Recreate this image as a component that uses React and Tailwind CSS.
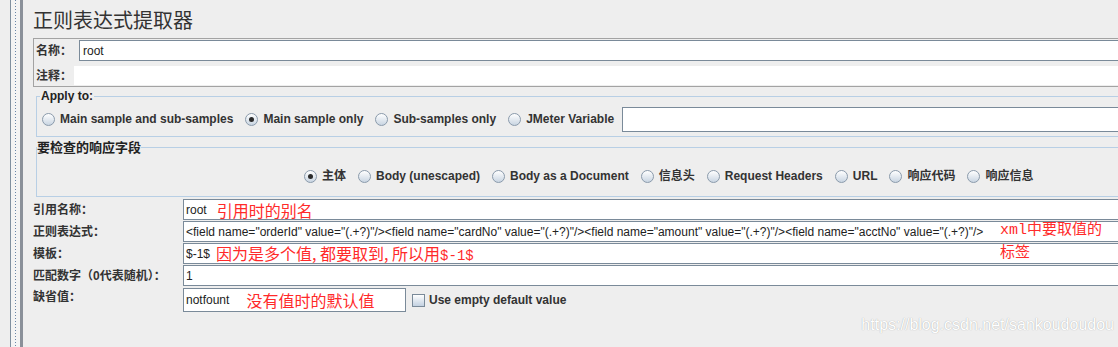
/* eslint-disable */

const ui = '"Liberation Sans", "Noto Sans CJK SC", sans-serif';
const cjk = '"Noto Sans CJK SC", "Liberation Sans", sans-serif';
const mono = '"Liberation Mono", "DejaVu Sans Mono", monospace';

const labelClass = 'text-[12px] font-bold text-[#333333] whitespace-nowrap';
const noteClass = 'text-[16px] leading-none text-[#ff2a2a] whitespace-nowrap';

function Radio({ checked, label }) {
  return (
    <label className="flex items-center gap-[5px]">
      <span className="flex h-[13px] w-[13px] items-center justify-center rounded-full border border-[#8a9aab] bg-gradient-to-b from-white to-[#c9d5e2]">
        {checked && <span className="h-[5px] w-[5px] rounded-full bg-[#2b2b2b]" />}
      </span>
      <span className={labelClass}>{label}</span>
    </label>
  );
}

function Field({ className = '', children }) {
  return (
    <div className={`flex items-center gap-[10px] border border-[#7a8a99] bg-white pl-[2px] ${className}`}>
      {children}
    </div>
  );
}

const regex =
  '<field name="orderId" value="(.+?)"/><field name="cardNo" value="(.+?)"/><field name="amount" value="(.+?)"/><field name="acctNo" value="(.+?)"/>';

export default function App() {
  return (
    <div className="relative flex h-[347px] w-[1118px] overflow-hidden bg-[#eeeeee]" style={{ fontFamily: ui }}>
      {/* left gutter */}
      <div className="w-[10px] shrink-0" />
      <div className="w-px shrink-0 bg-[#8090a0]" />
      <div className="flex w-[9px] shrink-0 justify-center bg-[#f4f4f4]">
        <div className="w-px bg-[repeating-linear-gradient(to_bottom,#6a86a8_0_1px,transparent_1px_3px)]" />
      </div>
      <div className="w-[3px] shrink-0 bg-[#8a9099]" />

      <div className="flex min-w-0 flex-1 flex-col pl-[10px]">
        <h1 className="pt-[9px] text-[20px] leading-[22px] text-[#333333]" style={{ fontFamily: cjk }}>
          正则表达式提取器
        </h1>

        {/* name / comment */}
        <div className="mt-[7px] mr-[-4px] flex flex-col border border-[#a3a3a3] pb-[1px]">
          <div className="flex h-[22px] items-center pt-[1px]">
            <span className={`${labelClass} w-[45px] pl-[2px]`}>名称：</span>
            <div className="flex h-[21px] flex-1 items-center border-y border-l border-[#7a8a99] bg-white pl-[3px] text-[12px] text-[#222]">
              root
            </div>
          </div>
          <div className="mt-[5px] flex h-[19px] items-center">
            <span className={`${labelClass} w-[40px] pl-[2px]`}>注释：</span>
            <div className="h-[19px] flex-1 bg-white" />
          </div>
        </div>

        {/* apply to */}
        <fieldset className="mt-[2px] mr-[-4px] ml-[3px] h-[48px] border border-[#b8cfe5] pl-[3px]">
          <legend className="px-px text-[12px] leading-[14px] font-bold text-[#222]">Apply to:</legend>
          <div className="flex h-[32px] items-center pl-[2px]">
            <div className="flex items-center gap-[12px]">
              <Radio label="Main sample and sub-samples" />
              <Radio checked label="Main sample only" />
              <Radio label="Sub-samples only" />
              <Radio label="JMeter Variable" />
            </div>
            <div className="ml-[8px] h-[25px] flex-1 border-y border-l border-[#7a8a99] bg-white" />
          </div>
        </fieldset>

        {/* response field */}
        <fieldset className="mt-[3px] mr-[-4px] ml-[3px] h-[57px] border border-[#b8cfe5]">
          <legend className="text-[13px] leading-[14px] font-bold text-[#222]" style={{ fontFamily: cjk }}>
            要检查的响应字段
          </legend>
          <div className="flex h-[41px] items-center pt-[3px] pl-[267px]">
            <div className="flex items-center gap-[12px]">
              <Radio checked label="主体" />
              <Radio label="Body (unescaped)" />
              <Radio label="Body as a Document" />
              <Radio label="信息头" />
              <Radio label="Request Headers" />
              <Radio label="URL" />
              <Radio label="响应代码" />
              <Radio label="响应信息" />
            </div>
          </div>
        </fieldset>

        {/* extractor rows */}
        <div className="relative mt-[2px] mr-[-4px] grid grid-cols-[150px_1fr] gap-y-[1px]">
          <span className={`${labelClass} flex items-center`}>引用名称：</span>
          <Field className="h-[21px]">
            <span className="text-[12px] text-[#222]">root</span>
            <span className={noteClass} style={{ fontFamily: cjk }}>引用时的别名</span>
          </Field>

          <span className={`${labelClass} flex items-center`}>正则表达式：</span>
          <Field className="h-[21px]">
            <span className="text-[12px] whitespace-nowrap text-[#222]">{regex}</span>
          </Field>

          <span className={`${labelClass} flex items-center`}>模板：</span>
          <Field className="h-[21px]">
            <span className="text-[12px] text-[#222]">$-1$</span>
            <span className={`${noteClass} -ml-[4px]`} style={{ fontFamily: cjk }}>
              因为是多个值, 都要取到, 所以用<span className="text-[14px]" style={{ fontFamily: mono }}>$-1$</span>
            </span>
          </Field>

          <span className={`${labelClass} flex items-center`}>匹配数字（0代表随机）：</span>
          <Field className="h-[21px]">
            <span className="text-[12px] text-[#222]">1</span>
          </Field>

          <span className={`${labelClass} flex items-start pt-[1px]`}>缺省值：</span>
          <div className="mt-[1px] flex items-center">
            <Field className="h-[24px] w-[223px] gap-[17px]">
              <span className="text-[12px] text-[#222]">notfount</span>
              <span className={noteClass} style={{ fontFamily: cjk }}>没有值时的默认值</span>
            </Field>
            <span className="ml-[6px] h-[13px] w-[13px] border border-[#7a8a99] bg-gradient-to-b from-white to-[#c3d1e1]" />
            <span className={`${labelClass} ml-[4px]`}>Use empty default value</span>
          </div>

          {/* overlay note */}
          <div
            className="absolute top-[19px] left-[967px] text-[15px] leading-[20px] text-[#ff2a2a]"
            style={{ fontFamily: cjk }}
          >
            <div>
              <span style={{ fontFamily: mono, fontSize: 15 }}>xml</span>中要取值的
            </div>
            <div>标签</div>
          </div>
        </div>
      </div>

      {/* watermark */}
      <div className="absolute right-[4px] bottom-[10px] text-[16px] text-white [text-shadow:0_0_1px_#9a9a9a]">
        https://blog.csdn.net/sankoudoudou
      </div>
    </div>
  );
}
